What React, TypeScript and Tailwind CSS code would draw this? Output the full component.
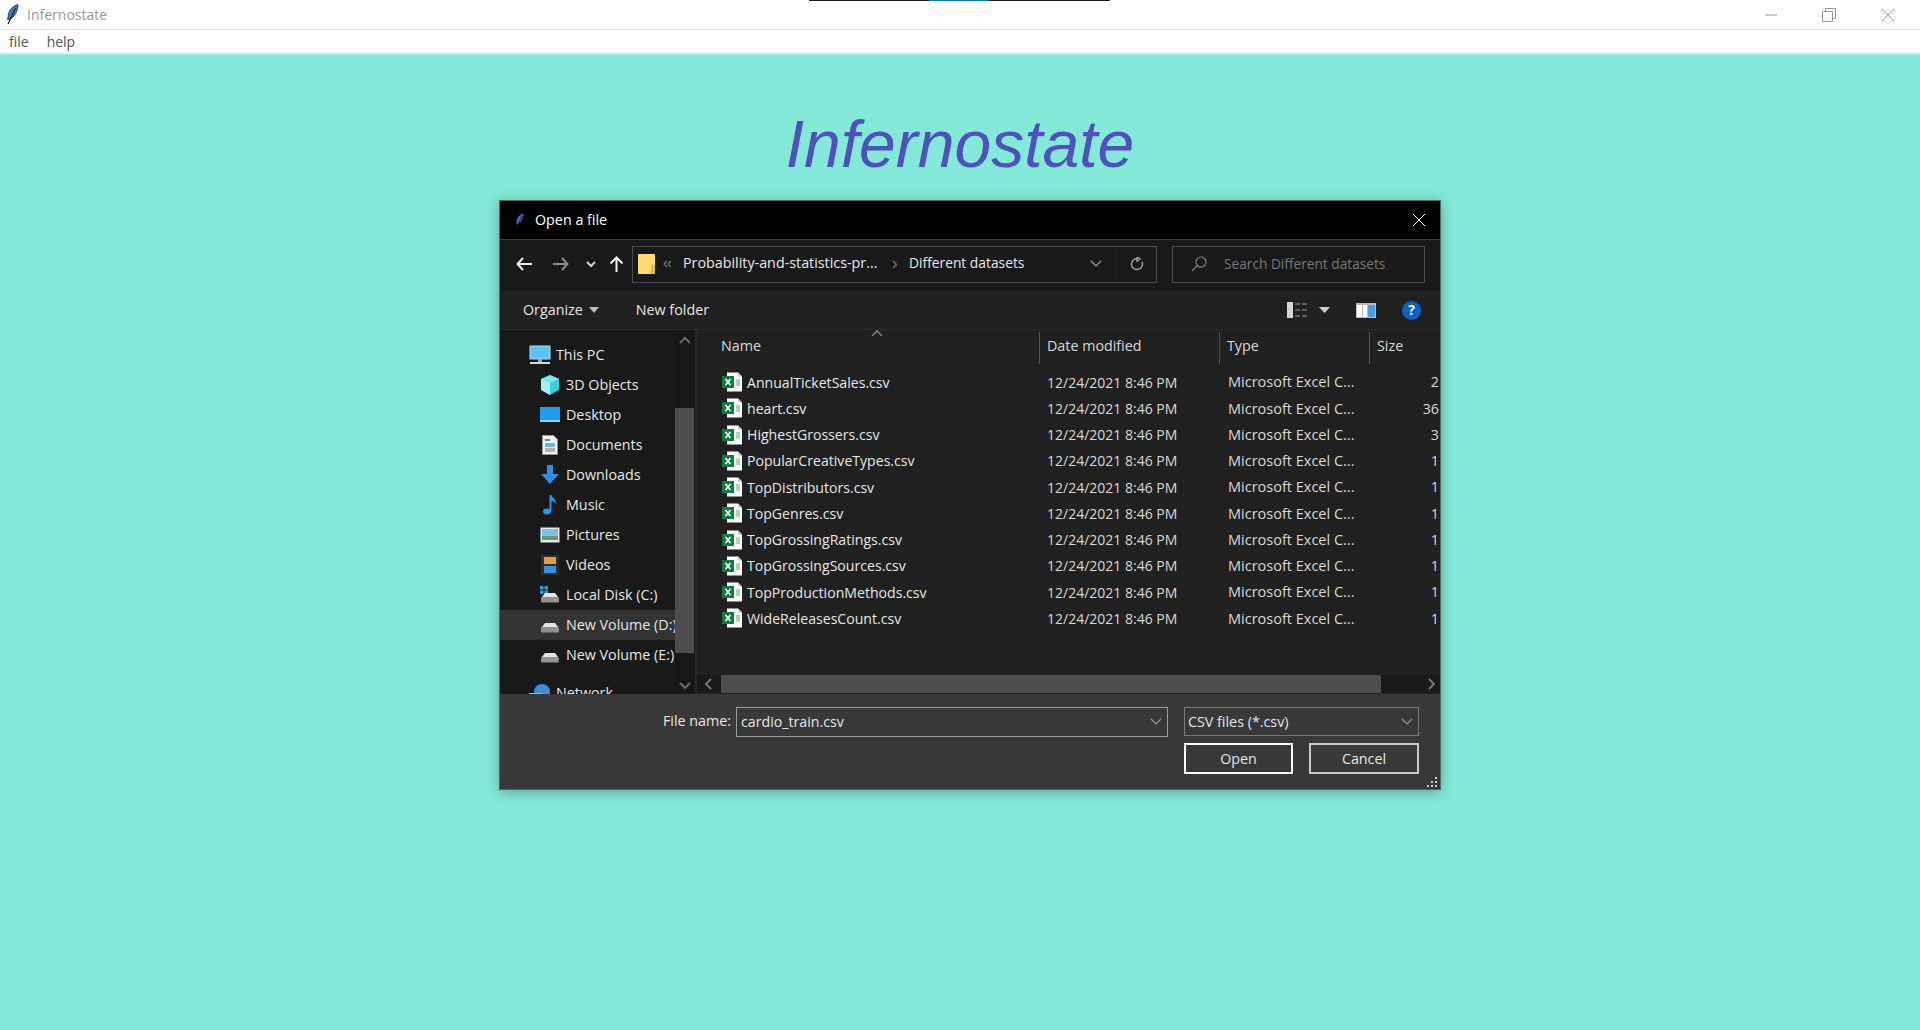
import React from "react";

const FONT = "font-['Open_Sans','Noto_Sans',sans-serif]";

const files = [
  ["AnnualTicketSales.csv", "2"],
  ["heart.csv", "36"],
  ["HighestGrossers.csv", "3"],
  ["PopularCreativeTypes.csv", "1"],
  ["TopDistributors.csv", "1"],
  ["TopGenres.csv", "1"],
  ["TopGrossingRatings.csv", "1"],
  ["TopGrossingSources.csv", "1"],
  ["TopProductionMethods.csv", "1"],
  ["WideReleasesCount.csv", "1"],
];

function Feather({ s = 20 }: { s?: number }) {
  return (
    <svg width={s * 0.6} height={s} viewBox="0 0 12 20">
      <path d="M11.5 0.5C6 2 2.5 6 2 12L1.5 15l2-.5C8 13 11 7 11.5.5z" fill="#3f78c4" stroke="#1d2c44" strokeWidth="0.8" />
      <path d="M9 4L2 19" stroke="#222" strokeWidth="1.2" />
    </svg>
  );
}

function Excel() {
  return (
    <svg width="21" height="20" viewBox="0 0 21 20">
      <path d="M5 0.5h11l4 4V19.5H5z" fill="#fff" />
      <path d="M16 0.5l4 4h-4z" fill="#c8c8c8" />
      <rect x="14" y="7" width="4" height="7" fill="#a8d8bd" />
      <rect x="0" y="4" width="12" height="12" fill="#107c41" />
      <path d="M3.5 7l5 6M8.500 7l-5 6" stroke="#fff" strokeWidth="1.6" />
    </svg>
  );
}

function Drive({ win }: { win?: boolean }) {
  return (
    <svg width="20" height="20" viewBox="0 0 20 20">
      {win && (
        <g fill="#19a5e0">
          <rect x="0" y="1" width="3.5" height="3.5" />
          <rect x="4.5" y="1" width="3.5" height="3.5" />
          <rect x="0" y="5.5" width="3.5" height="3.5" />
          <rect x="4.5" y="5.500" width="3.5" height="3.5" />
        </g>
      )}
      <path d="M2 12l3-4h10l3 4z" fill="#e4e4e4" />
      <rect x="1" y="12" width="18" height="5.5" rx="1" fill="#8f8f8f" />
      <rect x="14" y="14" width="2" height="1.5" fill="#52e052" />
    </svg>
  );
}

function NavIcon({ kind }: { kind: string }) {
  switch (kind) {
    case "pc":
      return (
        <svg width="22" height="20" viewBox="0 0 22 20">
          <rect x="1" y="1" width="20" height="13" fill="#5cc4f5" stroke="#aee3fb" />
          <rect x="9" y="14" width="4" height="3" fill="#9aa5ad" />
          <rect x="1" y="17" width="20" height="2" fill="#d5d9dc" />
        </svg>
      );
    case "3d":
      return (
        <svg width="20" height="20" viewBox="0 0 20 20">
          <path d="M10 0L19 4v11l-9 5-9-5V4z" fill="#38cfe0" />
          <path d="M1 4l9 4v12l-9-5z" fill="#a8eef2" />
          <path d="M10 0l9 4-9 4-9-4z" fill="#7be6ee" />
        </svg>
      );
    case "desktop":
      return (
        <svg width="20" height="16" viewBox="0 0 20 16">
          <rect x="0" y="0" width="20" height="14" fill="#1f9bf0" />
          <rect x="0" y="13" width="20" height="2" fill="#8fd0f8" />
        </svg>
      );
    case "docs":
      return (
        <svg width="16" height="20" viewBox="0 0 16 20">
          <path d="M0.500 0.500h11l4 4v15H0.500z" fill="#f0f0f0" stroke="#999" />
          <rect x="3" y="4" width="5" height="2" fill="#4a90d0" />
          <rect x="3" y="8" width="10" height="4" fill="#6cb5e8" />
          <path d="M3 14h10M3 16h10" stroke="#777" />
        </svg>
      );
    case "down":
      return (
        <svg width="20" height="20" viewBox="0 0 20 20">
          <path d="M7 0h6v9h6l-9 10L1 9h6z" fill="#2f8fe0" />
        </svg>
      );
    case "music":
      return (
        <svg width="16" height="20" viewBox="0 0 16 20">
          <ellipse cx="5" cy="16.5" rx="4" ry="3" fill="#1e9bf0" />
          <path d="M7.500 16V0h2c.5 3 5 4 5 9-1-2-3-3-5-3v10z" fill="#1e9bf0" />
        </svg>
      );
    case "pics":
      return (
        <svg width="20" height="16" viewBox="0 0 20 16">
          <rect x="0.5" y="0.5" width="19" height="15" fill="#e8e8e8" />
          <rect x="2" y="2" width="16" height="7" fill="#7cc3ea" />
          <rect x="2" y="9" width="16" height="4" fill="#5f9c78" />
        </svg>
      );
    case "videos":
      return (
        <svg width="18" height="20" viewBox="0 0 18 20">
          <rect x="0" y="0" width="18" height="20" fill="#2e2e2e" />
          <rect x="3" y="2" width="12" height="7" fill="#e0a040" />
          <rect x="3" y="11" width="12" height="7" fill="#3c8fe0" />
        </svg>
      );
    case "net":
      return (
        <svg width="22" height="20" viewBox="0 0 22 20">
          <circle cx="13" cy="9" r="8" fill="#3a8fd8" />
          <rect x="0" y="10" width="14" height="6" fill="#7cc3ea" />
        </svg>
      );
    case "c":
      return <Drive win />;
    default:
      return <Drive />;
  }
}

const navItems = [
  ["This PC", "pc", 0],
  ["3D Objects", "3d", 1],
  ["Desktop", "desktop", 1],
  ["Documents", "docs", 1],
  ["Downloads", "down", 1],
  ["Music", "music", 1],
  ["Pictures", "pics", 1],
  ["Videos", "videos", 1],
  ["Local Disk (C:)", "c", 1],
  ["New Volume (D:)", "d", 1],
  ["New Volume (E:)", "d", 1],
] as const;

function Chevron({ dir, c = "#8a8a8a" }: { dir: "up" | "down" | "left" | "right"; c?: string }) {
  const p = {
    up: "M1 8l5-5 5 5",
    down: "M1 4l5 5 5-5",
    left: "M8 1L3 6l5 5",
    right: "M4 1l5 5-5 5",
  }[dir];
  return (
    <svg width="12" height="12" viewBox="0 0 12 12">
      <path d={p} fill="none" stroke={c} strokeWidth="2" />
    </svg>
  );
}

function Thin({ c = "#9a9a9a" }: { c?: string }) {
  return (
    <svg width="12" height="8" viewBox="0 0 12 8">
      <path d="M1 1l5 5 5-5" fill="none" stroke={c} strokeWidth="1.2" />
    </svg>
  );
}

export default function App() {
  return (
    <div className={`relative h-[1030px] w-[1920px] overflow-hidden bg-[#84e9d8] ${FONT}`}>
      {/* taskbar sliver above the window */}
      <div className="absolute left-[809px] top-0 flex h-px w-[301px] bg-[#1c1c1c]">
        <div className="ml-[120px] h-px w-[60px] bg-[#0a78c8]" />
      </div>

      <div className="flex h-[30px] items-center border-b border-[#e3e3e3] bg-white">
        <div className="ml-[6px] flex w-[21px] justify-start">
          <Feather s={21} />
        </div>
        <span className="text-[14px] text-[#9a9a9a]">Infernostate</span>
        <div className="ml-auto flex items-center">
          <svg width="14" height="14" viewBox="0 0 14 14" className="mr-[44px]">
            <path d="M1 7h12" stroke="#9a9a9a" strokeWidth="1" />
          </svg>
          <svg width="14" height="14" viewBox="0 0 14 14" className="mr-[45px]">
            <path d="M0.5 3.5h10v10h-10zM3.5 3.5v-3h10v10h-3" fill="none" stroke="#9a9a9a" />
          </svg>
          <svg width="14" height="14" viewBox="0 0 14 14" className="mr-[25px]">
            <path d="M1 1l12 12M13 1L1 13" stroke="#9a9a9a" />
          </svg>
        </div>
      </div>

      <div className="flex h-[24px] items-center gap-[18px] border-b border-[#f0f0f0] bg-white pl-[9px] text-[14px] text-[#555]">
        <span>file</span>
        <span>help</span>
      </div>

      <h1 className="mt-[53px] text-center font-['Liberation_Sans',sans-serif] text-[66px] leading-[75px] text-[#4f52b8] italic">
        Infernostate
      </h1>

      {/* dialog window */}
      <div className="absolute left-[499px] top-[200px] flex h-[590px] w-[942px] flex-col overflow-hidden border border-[#4a6a66] bg-[#191919] text-[14.3px] text-[#e6e6e6] shadow-[0_2px_12px_rgba(0,0,0,0.3)]">
        <div className="flex h-[38px] shrink-0 items-center bg-black pl-[15px] pr-[14px] text-white">
          <Feather s={15} />
          <span className="ml-[11px]">Open a file</span>
          <svg width="14" height="14" viewBox="0 0 14 14" className="ml-auto">
            <path d="M1 1l12 12M13 1L1 13" stroke="#fff" />
          </svg>
        </div>

        {/* nav row */}
        <div className="flex h-[52px] shrink-0 items-center border-t border-[#3a3a3a] bg-[#191919] pb-[3px]">
          <svg width="16" height="14" viewBox="0 0 16 14" className="ml-[16px]">
            <path d="M7 1L1.500 7 7 13M2 7h14" fill="none" stroke="#f0f0f0" strokeWidth="2" />
          </svg>
          <svg width="16" height="14" viewBox="0 0 16 14" className="ml-[21px]">
            <path d="M9 1l5.500 6L9 13M14 7H0" fill="none" stroke="#8a8a8a" strokeWidth="2" />
          </svg>
          <svg width="10" height="8" viewBox="0 0 10 8" className="ml-[17px]">
            <path d="M1 2l4 4 4-4" fill="none" stroke="#d0d0d0" strokeWidth="2" />
          </svg>
          <svg width="15" height="16" viewBox="0 0 15 16" className="ml-[13px]">
            <path d="M1.500 7.500l6-6 6 6M7.500 1v15" fill="none" stroke="#f0f0f0" strokeWidth="2" />
          </svg>
          <div className="ml-[8px] flex h-[37px] w-[525px] items-center border border-[#4d4d4d]">
            <svg width="17" height="20" viewBox="0 0 17 20" className="ml-[5px]">
              <rect width="17" height="20" rx="1" fill="#fddc74" />
              <rect x="13" y="11" width="4" height="9" fill="#e8b840" />
            </svg>
            <svg width="9" height="8" viewBox="0 0 9 8" className="ml-[8px]">
              <path d="M4 1L1 4l3 3M8 1L5 4l3 3" fill="none" stroke="#777" strokeWidth="1.2" />
            </svg>
            <span className="ml-[11px] w-[195px] truncate pb-[2px] text-[14.3px] font-medium text-[#e8e8e8]">Probability-and-statistics-pr...</span>
            <svg width="6" height="9" viewBox="0 0 6 9" className="ml-[14px]">
              <path d="M1 1l3.500 3.500L1 8" fill="none" stroke="#777" strokeWidth="1.3" />
            </svg>
            <span className="ml-[11px] pb-[2px] text-[13.8px] font-medium text-[#e8e8e8]">Different datasets</span>
            <span className="ml-auto mr-[14px]">
              <Thin c="#a0a0a0" />
            </span>
            <span className="flex h-full w-[40px] items-center justify-center border-l border-[#202020]">
              <svg width="14" height="14" viewBox="0 0 14 14">
                <path d="M7 1.500a5.500 5.500 0 1 0 5 3.200M7 0v4l3-2z" fill="none" stroke="#9a9a9a" strokeWidth="1.500" />
              </svg>
            </span>
          </div>
          <div className="ml-[15px] flex h-[37px] w-[253px] items-center border border-[#4d4d4d] text-[13.7px] text-[#777]">
            <svg width="16" height="16" viewBox="0 0 16 16" className="ml-[18px]">
              <circle cx="10" cy="6" r="5" fill="none" stroke="#808080" strokeWidth="1.2" />
              <path d="M6.500 9.500L1 15" stroke="#808080" strokeWidth="1.2" />
            </svg>
            <span className="ml-[17px]">Search Different datasets</span>
          </div>
        </div>

        {/* toolbar */}
        <div className="flex h-[38px] shrink-0 items-center bg-[#202020]">
          <span className="ml-[23px]">Organize</span>
          <svg width="10" height="6" viewBox="0 0 10 6" className="ml-[6px]">
            <path d="M0 0h10L5 6z" fill="#bcbcbc" />
          </svg>
          <span className="ml-[37px]">New folder</span>
          <svg width="21" height="16" viewBox="0 0 21 16" className="ml-auto">
            <rect x="0" y="0" width="6" height="16" fill="#d5d5d5" />
            <path d="M8 2h13M8 8h13M8 14h13" stroke="#9a9a9a" strokeDasharray="5 2" />
          </svg>
          <svg width="11" height="6" viewBox="0 0 11 6" className="ml-[11px]">
            <path d="M0 0h11L5.500 6z" fill="#d0d0d0" />
          </svg>
          <svg width="20" height="15" viewBox="0 0 20 15" className="ml-[26px]">
            <rect width="20" height="15" fill="#bdbdbd" />
            <rect x="1" y="2" width="5" height="12" fill="#fff" />
            <rect x="7" y="2" width="4" height="12" fill="#fff" />
            <rect x="12" y="2" width="7" height="12" fill="#4a9be8" />
          </svg>
          <span className="ml-[26px] mr-[19px] flex h-[19px] w-[19px] items-center justify-center rounded-full bg-[#0a63c4] text-[14px] font-bold leading-none text-white">
            ?
          </span>
        </div>

        {/* panes */}
        <div className="flex min-h-0 flex-1 border-t border-[#2a2a2a]">
          <div className="flex w-[197px] shrink-0 overflow-hidden border-r-2 border-[#282828] bg-[#191919]">
            <div className="w-[175px] shrink-0 overflow-hidden pt-[10px]">
              {navItems.map(([label, icon, indent], i) => (
                <div
                  key={label}
                  className={`flex h-[30px] items-center overflow-hidden whitespace-nowrap ${i === 9 ? "bg-[#333333]" : ""}`}
                >
                  <div className={`flex shrink-0 justify-center ${indent ? "ml-[39px] w-[22px]" : "ml-[29px] w-[22px]"}`}>
                    <NavIcon kind={icon} />
                  </div>
                  <span className="ml-[5px]">{label}</span>
                </div>
              ))}
              <div className="mt-[8px] flex h-[30px] items-center whitespace-nowrap">
                <div className="ml-[29px] flex w-[22px] shrink-0 justify-center">
                  <NavIcon kind="net" />
                </div>
                <span className="ml-[5px]">Network</span>
              </div>
            </div>
            <div className="flex w-[19px] shrink-0 flex-col items-center bg-[#171717]">
              <div className="flex h-[22px] items-center"><Chevron dir="up" c="#6a6a6a" /></div>
              <div className="mt-[56px] h-[245px] w-full bg-[#4d4d4d]" />
              <div className="mt-auto flex h-[19px] items-center"><Chevron dir="down" c="#6a6a6a" /></div>
            </div>
          </div>

          <div className="relative flex min-w-0 flex-1 flex-col bg-[#202020]">
            <span className="absolute left-[174px] top-0">
              <svg width="12" height="7" viewBox="0 0 12 7">
                <path d="M1 6l5-5 5 5" fill="none" stroke="#888" strokeWidth="1.3" />
              </svg>
            </span>
            <div className="flex h-[34px] shrink-0 items-center pt-[2px] text-[#d8d8d8]">
              <div className="h-full w-[342px] shrink-0 pl-[24px] pt-[3px]">Name</div>
              <div className="h-full w-[180px] shrink-0 border-l border-[#555] pl-[7px] pt-[3px]">Date modified</div>
              <div className="h-full w-[150px] shrink-0 border-l border-[#555] pl-[7px] pt-[3px]">Type</div>
              <div className="h-full flex-1 border-l border-[#555] pl-[7px] pt-[3px]">Size</div>
            </div>
            <div className="mt-[5px] min-h-0 flex-1 overflow-hidden">
              {files.map(([name, size]) => (
                <div key={name} className="flex h-[26.25px] items-center whitespace-nowrap">
                  <div className="ml-[25px] w-[25px] shrink-0"><Excel /></div>
                  <span className="w-[300px] shrink-0 text-[14.1px]">{name}</span>
                  <span className="w-[181px] shrink-0 text-[14px] text-[#d8d8d8]">12/24/2021 8:46 PM</span>
                  <span className="w-[150px] shrink-0 text-[14.5px] text-[#d8d8d8]">Microsoft Excel C...</span>
                  <span className="flex-1 pr-[1px] text-right text-[#d8d8d8]">{size}</span>
                </div>
              ))}
            </div>
            <div className="flex h-[19px] shrink-0 items-center border-b border-[#222] bg-[#191919]">
              <div className="flex w-[24px] shrink-0 justify-center"><Chevron dir="left" c="#777" /></div>
              <div className="h-full w-[660px] shrink-0 bg-[#4d4d4d]" />
              <div className="ml-auto flex w-[19px] justify-center"><Chevron dir="right" c="#777" /></div>
            </div>
          </div>
        </div>

        {/* footer */}
        <div className="relative flex h-[95px] shrink-0 bg-[#383838]">
          <div className="flex flex-1 flex-col items-end pr-[21px] pt-[13px]">
            <div className="flex items-start">
              <span className="mr-[5px] mt-[3px]">File name:</span>
              <div className="flex h-[30px] w-[432px] items-center border border-[#9a9a9a] pl-[4px] pr-[5px] text-[14.2px]">
                <span>cardio_train.csv</span>
                <span className="ml-auto"><Thin /></span>
              </div>
              <div className="ml-[16px] flex h-[29px] w-[235px] items-center border border-[#7a7a7a] pl-[3px] pr-[5px]">
                <span>CSV files (*.csv)</span>
                <span className="ml-auto"><Thin /></span>
              </div>
            </div>
            <div className="mt-[6px] flex gap-[16px]">
              <div className="flex h-[31px] w-[109px] items-center justify-center border-2 border-white">Open</div>
              <div className="flex h-[31px] w-[110px] items-center justify-center border-2 border-[#c8c8c8]">Cancel</div>
            </div>
          </div>
          <svg width="11" height="11" viewBox="0 0 11 11" className="absolute bottom-[1px] right-[2px]">
            <g fill="#d0d0d0">
              <rect x="8" y="0" width="2" height="2" />
              <rect x="4" y="4" width="2" height="2" />
              <rect x="8" y="4" width="2" height="2" />
              <rect x="0" y="8" width="2" height="2" />
              <rect x="4" y="8" width="2" height="2" />
              <rect x="8" y="8" width="2" height="2" />
            </g>
          </svg>
        </div>
      </div>
    </div>
  );
}
